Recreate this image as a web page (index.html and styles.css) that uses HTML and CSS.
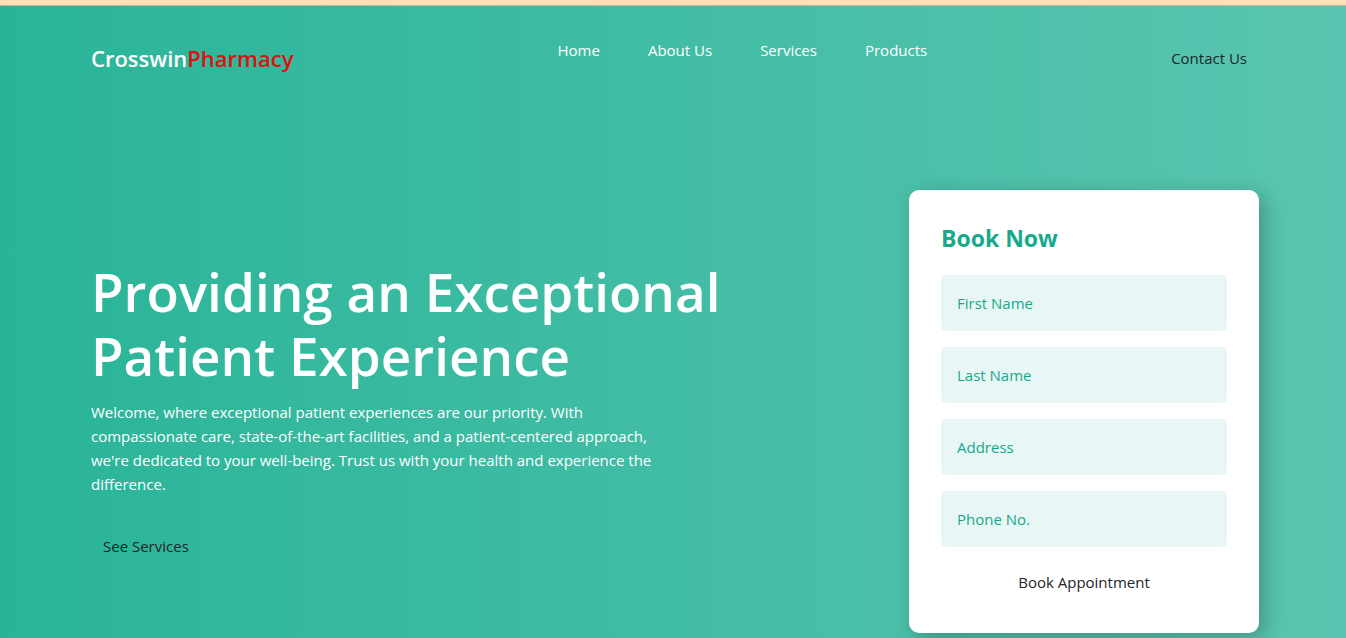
FILE: index.html
```html
<!DOCTYPE html>
<html lang="en">
<head>
<meta charset="utf-8">
<meta name="viewport" content="width=device-width, initial-scale=1">
<title>Crosswin Pharmacy</title>
<link rel="stylesheet" href="styles.css">
</head>
<body>
<div class="page">
  <header class="header">
    <a class="brand" href="#">Crosswin<span class="brand-accent">Pharmacy</span></a>
    <nav>
      <ul class="nav-list">
        <li><a href="#">Home</a></li>
        <li><a href="#">About Us</a></li>
        <li><a href="#">Services</a></li>
        <li><a href="#">Products</a></li>
      </ul>
    </nav>
    <button class="btn" type="button">Contact Us</button>
  </header>
  <main class="hero">
    <section class="intro">
      <h1 class="title">Providing an Exceptional Patient Experience</h1>
      <p class="lead">Welcome, where exceptional patient experiences are our priority. With compassionate care, state-of-the-art facilities, and a patient-centered approach, we're dedicated to your well-being. Trust us with your health and experience the difference.</p>
      <button class="btn" type="button">See Services</button>
    </section>
    <form class="card">
      <h2 class="card-title">Book Now</h2>
      <input class="field" type="text" placeholder="First Name" aria-label="First Name">
      <input class="field" type="text" placeholder="Last Name" aria-label="Last Name">
      <input class="field" type="text" placeholder="Address" aria-label="Address">
      <input class="field" type="tel" placeholder="Phone No." aria-label="Phone No.">
      <button class="btn" type="button">Book Appointment</button>
    </form>
  </main>
</div>
</body>
</html>
```
FILE: styles.css
```css
* {
  box-sizing: border-box;
}

body {
  margin: 0;
  font-family: "Open Sans", "Noto Sans", sans-serif;
  font-size: 15px;
  line-height: 24px;
  color: #fff;
}

.page {
  min-height: 100vh;
  padding: 0 87px 5px 91px;
  border-top: 5px solid #ffdfb9;
  background: linear-gradient(90deg, #29b498, #42bda5 50%, #51c2ab 80%, #5ac5b0);
  box-shadow: inset 0 1px 0 #b5bd9b;
}

a {
  color: inherit;
  text-decoration: none;
}

.header {
  display: flex;
  align-items: center;
  justify-content: space-between;
  padding-top: 33px;
}

.brand {
  font-size: 22px;
  font-weight: 600;
  line-height: 40px;
}

.brand-accent {
  color: #e01010;
}

.nav-list {
  display: flex;
  gap: 48px;
  margin: 0 0 16px;
  padding: 0 0 0 32px;
  list-style: none;
}

.btn {
  padding: 6px 12px;
  border: 0;
  background: transparent;
  color: #212529;
  font: inherit;
  cursor: pointer;
}

.hero {
  display: flex;
  align-items: center;
  justify-content: space-between;
  gap: 32px;
  padding-top: 112px;
}

.intro {
  flex: 0 1 680px;
}

.title {
  margin: 0 0 12px;
  font-size: 53px;
  font-weight: 600;
  line-height: 64px;
}

.lead {
  max-width: 580px;
  margin: 0 0 32px;
}

.card {
  display: flex;
  flex: 0 0 350px;
  flex-direction: column;
  gap: 16px;
  padding: 32px;
  border-radius: 10px;
  background: #fff;
  box-shadow: 5px 5px 20px rgba(0, 0, 0, 0.25);
}

.card .btn {
  padding: 7px 12px;
}

.card-title {
  margin: 0 0 5px;
  color: #17a98c;
  font-size: 23px;
  font-weight: 700;
  line-height: 32px;
}

.field {
  width: 100%;
  height: 56px;
  padding: 0 16px;
  border: 0;
  border-radius: 5px;
  background: #e8f7f5;
  color: #17a98c;
  font: inherit;
}

.field::placeholder {
  color: #17a98c;
  opacity: 1;
}
```
